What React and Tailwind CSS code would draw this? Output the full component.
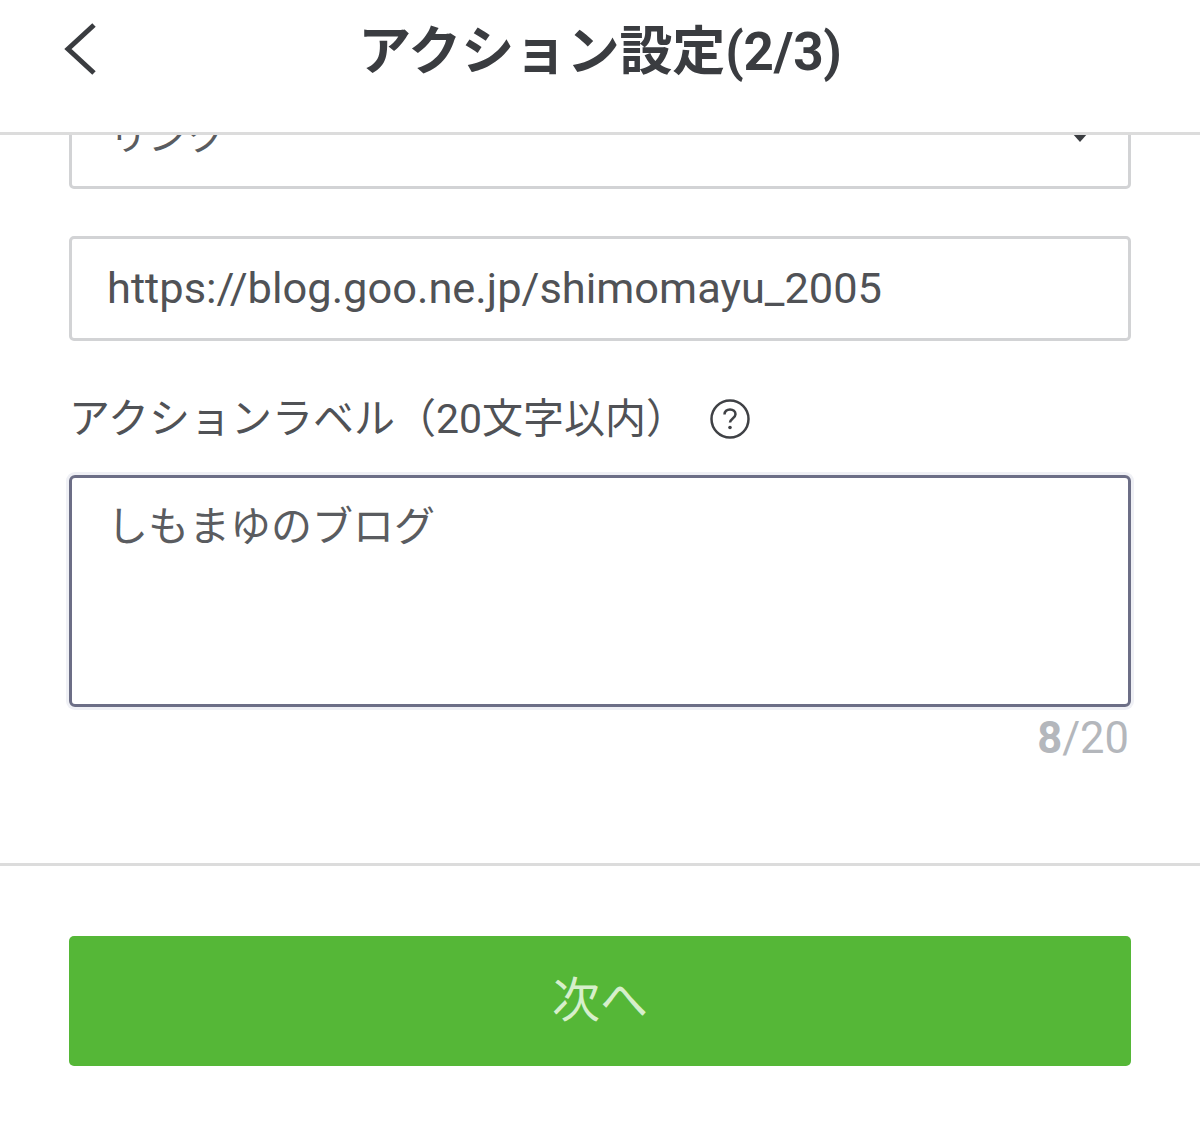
const cjk = 'font-["Roboto","Noto_Sans_CJK_JP",sans-serif]'

export default function App() {
  return (
    <div className={`w-[1200px] h-[1123px] overflow-hidden bg-white text-[#45474b] ${cjk}`}>
      {/* ヘッダー */}
      <header className="relative z-10 flex h-[135px] items-start justify-center border-b-[3px] border-[#dcdcdc] bg-white pt-[16px]">
        <button className="absolute left-[62px] top-[22px]">
          <svg width="36" height="54" viewBox="0 0 36 54" fill="none">
            <path d="M32 3 L6 27 L32 51" stroke="#3a3c40" strokeWidth="5" />
          </svg>
        </button>
        <h1 className="text-[53px] leading-[72px] font-bold tracking-[-0.2px] text-[#3a3c40]">アクション設定(2/3)</h1>
      </header>

      <main className="px-[69px]">
        {/* 種類（ヘッダーで上が隠れている） */}
        <div className="-mt-[50px] flex h-[104px] items-center justify-between rounded-[5px] border-[3px] border-[#d2d3d5] pl-[37px] pr-[40px] text-[39px] text-[#5a5c60]">
          <span>リンク</span>
          <span className="h-0 w-0 border-x-[8px] border-t-[9px] border-x-transparent border-t-[#3a3c40]" />
        </div>

        <div className="mt-[47px] flex h-[105px] items-center rounded-[5px] border-[3px] border-[#d2d3d5] pl-[35px] text-[43.4px] text-[#505256]">
          https://blog.goo.ne.jp/shimomayu_2005
        </div>

        <div className="mt-[50px] flex h-[56px] items-center">
          <span className="text-[41px] leading-[56px] text-[#505256]">アクションラベル（20文字以内）</span>
          <svg className="ml-[22px]" width="42" height="42" viewBox="0 0 42 42" fill="none">
            <circle cx="21" cy="21" r="18.5" stroke="#3f4145" strokeWidth="2.5" />
            <path d="M15.5 16.5c0-3.2 2.4-5 5.5-5s5.5 1.8 5.5 4.8c0 4-5.5 4.2-5.5 8.2" stroke="#3f4145" strokeWidth="2.5" />
            <circle cx="21" cy="29.5" r="1.8" fill="#3f4145" />
          </svg>
        </div>

        <div className="mt-[28px] h-[232px] rounded-[6px] border-[3px] border-[#6c6e86] pl-[35px] pt-[21px] text-[41px] leading-[56px] text-[#5a5c60] shadow-[0_0_0_3px_#eff0f5]">
          しもまゆのブログ
        </div>

        <div className="mt-[8px] pr-[2px] text-right text-[43.5px] leading-[48px] text-[#b4b7bc]">
          <span className="font-bold">8</span>/20
        </div>
      </main>

      {/* フッター */}
      <footer className="mt-[100px] border-t-[3px] border-[#dcdcdc] px-[69px] pt-[70px]">
        <button className="flex h-[130px] w-full items-center justify-center rounded-[5px] bg-[#55b737] text-[48px] text-[#d6efcb]">
          次へ
        </button>
      </footer>
    </div>
  )
}
